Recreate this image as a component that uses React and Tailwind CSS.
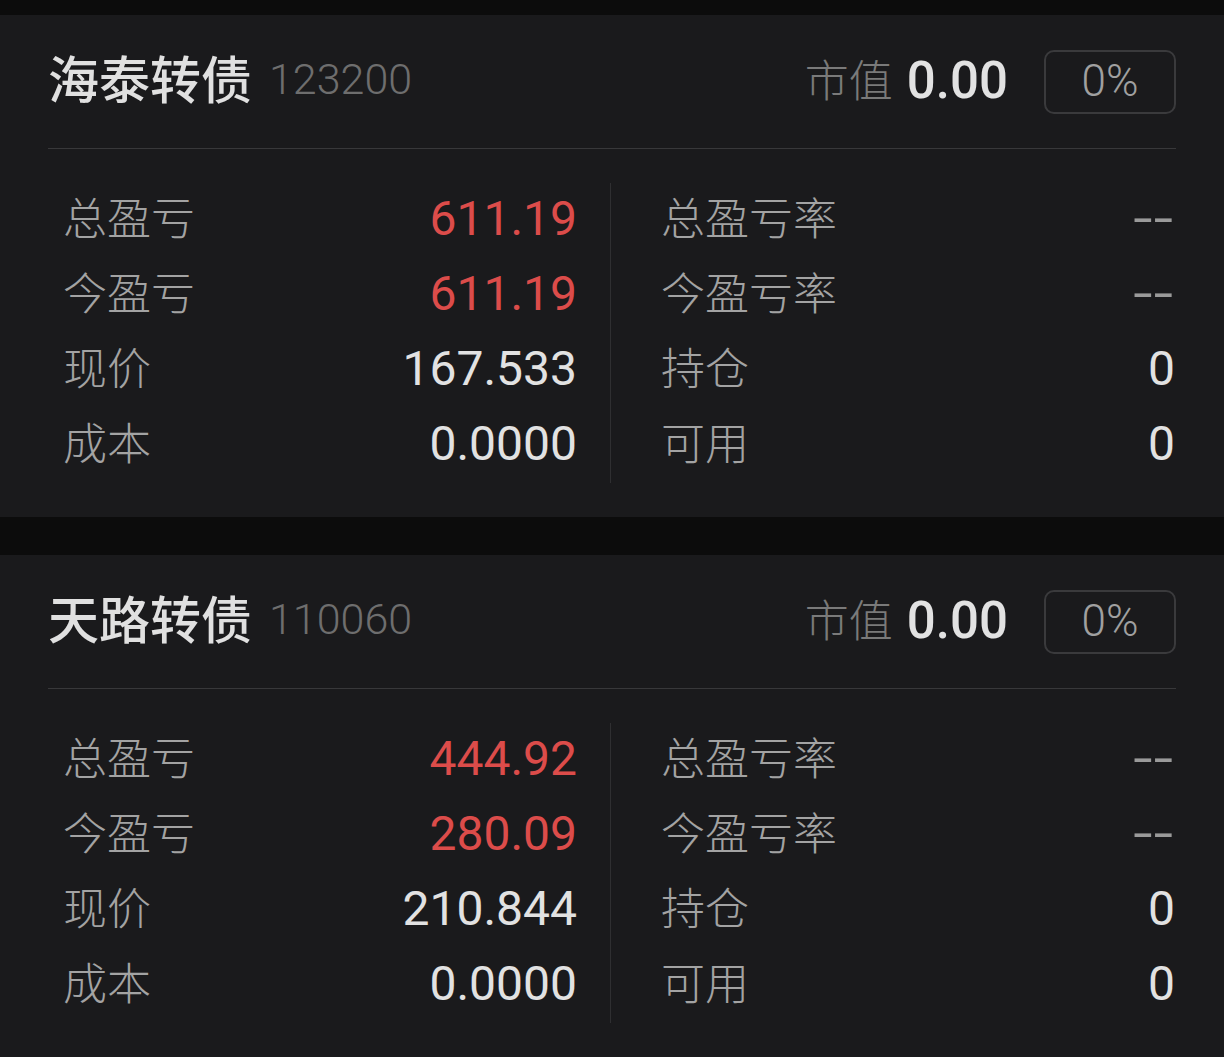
import React from "react";

const cards = [
  {
    name: "海泰转债",
    code: "123200",
    marketValue: "0.00",
    ratio: "0%",
    left: [
      { label: "总盈亏", value: "611.19", red: true },
      { label: "今盈亏", value: "611.19", red: true },
      { label: "现价", value: "167.533" },
      { label: "成本", value: "0.0000" },
    ],
    right: [
      { label: "总盈亏率", value: "--", dash: true },
      { label: "今盈亏率", value: "--", dash: true },
      { label: "持仓", value: "0" },
      { label: "可用", value: "0" },
    ],
  },
  {
    name: "天路转债",
    code: "110060",
    marketValue: "0.00",
    ratio: "0%",
    left: [
      { label: "总盈亏", value: "444.92", red: true },
      { label: "今盈亏", value: "280.09", red: true },
      { label: "现价", value: "210.844" },
      { label: "成本", value: "0.0000" },
    ],
    right: [
      { label: "总盈亏率", value: "--", dash: true },
      { label: "今盈亏率", value: "--", dash: true },
      { label: "持仓", value: "0" },
      { label: "可用", value: "0" },
    ],
  },
];

const cjk = "font-['Noto_Sans_CJK_SC',sans-serif]";
const num = "font-['Roboto','Noto_Sans_CJK_SC',sans-serif]";

const Row = ({ item }) => (
  <div className="flex h-[75px] items-center justify-between">
    <span className={`${cjk} mb-[10px] text-[44px] font-light leading-none text-[#a3a3a3]`}>
      {item.label}
    </span>
    {item.dash ? (
      <span
        className={`${num} mb-[4px] origin-right scale-x-[1.45] text-[48px] leading-none tracking-[1px] text-[#9a9a9a]`}
      >
        {item.value}
      </span>
    ) : (
      <span
        className={`${num} mb-[4px] text-[48px] leading-none ${
          item.red ? "text-[#dc4c4a]" : "text-[#e2e2e2]"
        }`}
      >
        {item.value}
      </span>
    )}
  </div>
);

const PositionCard = ({ card }) => (
  <div className="bg-[#1a1a1c] px-[48px] h-[502px]">
    {/* Header */}
    <div className="flex h-[133px] items-center justify-between">
      <div className="flex items-center">
        <span className={`${cjk} mb-[8px] text-[51px] font-medium leading-none text-[#e0e0e0]`}>
          {card.name}
        </span>
        <span className={`${num} mb-[4px] ml-[17px] text-[43px] font-light leading-none text-[#6e6e6e]`}>
          {card.code}
        </span>
      </div>
      <div className="flex items-center">
        <span className={`${cjk} mb-[8px] text-[44px] font-light leading-none text-[#7a7a7a]`}>
          市值
        </span>
        <span className={`${num} mb-[3px] ml-[14px] text-[51px] font-medium leading-none text-[#e2e2e2]`}>
          {card.marketValue}
        </span>
        <div className="ml-[36px] flex h-[64px] w-[132px] items-center justify-center rounded-[10px] border-2 border-[#3a3a3c]">
          <span className={`${num} mb-[2px] text-[44px] font-light leading-none text-[#a0a0a0]`}>
            {card.ratio}
          </span>
        </div>
      </div>
    </div>

    <div className="h-px bg-[#38383a]" />

    {/* Stats */}
    <div className="mt-[34px] flex">
      <div className="w-[563px] border-r border-[#2f2f31] pl-[15px] pr-[33px]">
        {card.left.map((item) => (
          <Row key={item.label} item={item} />
        ))}
      </div>
      <div className="flex-1 pl-[50px] pr-[1px]">
        {card.right.map((item) => (
          <Row key={item.label} item={item} />
        ))}
      </div>
    </div>
  </div>
);

export default function App() {
  return (
    <div className="min-h-[1057px] w-[1224px] bg-[#0c0c0c] pt-[15px]">
      <div className="flex flex-col gap-[38px]">
        {cards.map((card) => (
          <PositionCard key={card.code} card={card} />
        ))}
      </div>
    </div>
  );
}
